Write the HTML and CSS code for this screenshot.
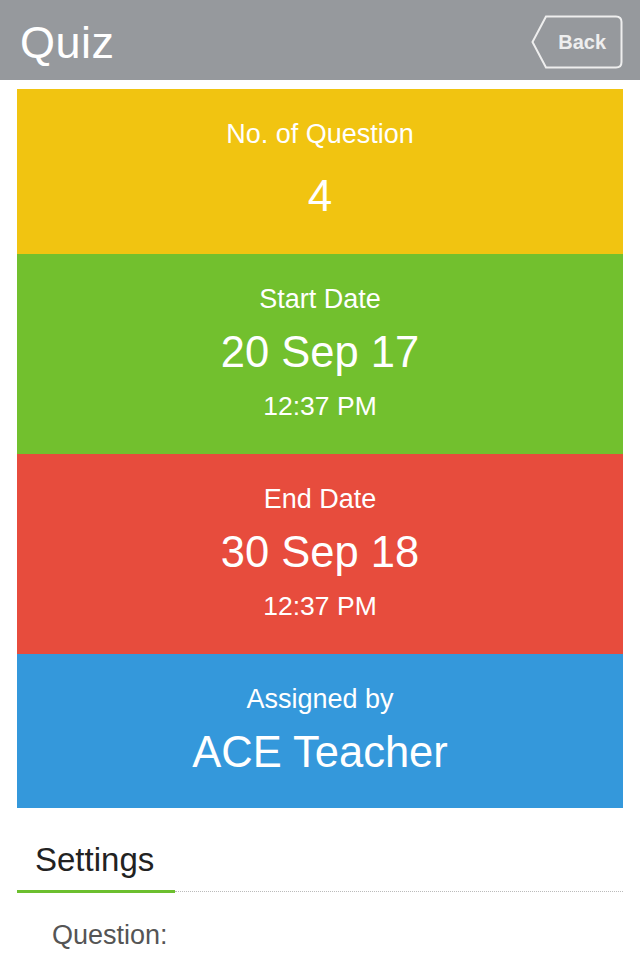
FILE: index.html
```html
<!DOCTYPE html>
<html>
<head>
<meta charset="utf-8">
<link rel="stylesheet" href="styles.css">
</head>
<body>
<header class="topbar">
  <h1 class="title">Quiz</h1>
  <button class="back">
    <svg class="back-shape" viewBox="0 0 92 54" width="92" height="54" aria-hidden="true">
      <path d="M15 1.5 L85 1.5 Q90.5 1.5 90.5 7 L90.5 47 Q90.5 52.5 85 52.5 L15 52.5 L1.5 27 Z" fill="none" stroke="#eeeeee" stroke-width="2"/>
    </svg>
    <span class="back-label">Back</span>
  </button>
</header>
<main class="content">
  <section class="card card-yellow">
    <div class="card-label">No. of Question</div>
    <div class="card-value card-value-count">4</div>
  </section>
  <section class="card card-green">
    <div class="card-label">Start Date</div>
    <div class="card-value">20 Sep 17</div>
    <div class="card-time">12:37 PM</div>
  </section>
  <section class="card card-red">
    <div class="card-label">End Date</div>
    <div class="card-value">30 Sep 18</div>
    <div class="card-time">12:37 PM</div>
  </section>
  <section class="card card-blue">
    <div class="card-label">Assigned by</div>
    <div class="card-value">ACE Teacher</div>
  </section>
  <div class="tabs">
    <div class="tab tab-active">Settings</div>
    <div class="tab-rest"></div>
  </div>
  <div class="setting-row">Question:</div>
</main>
</body>
</html>
```
FILE: styles.css
```css
* { box-sizing: border-box; }
html, body { margin: 0; padding: 0; background: #ffffff; }
body {
  font-family: "Liberation Sans", Arial, sans-serif;
  width: 640px;
  height: 960px;
  overflow: hidden;
}
.topbar {
  height: 80px;
  background: #96999d;
  display: flex;
  align-items: center;
  justify-content: space-between;
  padding: 0 17px 0 20px;
}
.title {
  margin: 4px 0 0;
  font-weight: 400;
  font-size: 45px;
  color: #ffffff;
  letter-spacing: 0.5px;
  line-height: 1;
}
.back {
  position: relative;
  width: 92px;
  height: 54px;
  padding: 0;
  border: 0;
  background: transparent;
  display: flex;
  align-items: center;
  justify-content: flex-end;
  margin-top: 4px;
}
.back-shape {
  position: absolute;
  left: 0;
  top: 0;
}
.back-label {
  position: relative;
  font-family: "Liberation Sans", Arial, sans-serif;
  font-weight: 700;
  font-size: 20px;
  color: #eeeeee;
  padding-right: 17px;
}
.content {
  padding: 9px 17px 0;
}
.card {
  color: #ffffff;
  text-align: center;
  padding-top: 25px;
}
.card-yellow { background: #f1c411; height: 165px; }
.card-green { background: #72c02e; height: 200px; }
.card-red { background: #e74c3d; height: 200px; }
.card-blue { background: #3498db; height: 154px; }
.card-label {
  font-size: 27px;
  line-height: 40px;
}
.card-value {
  font-size: 43.5px;
  line-height: 66px;
}
.card-value-count {
  margin-top: 9px;
  font-size: 44px;
}
.card-time {
  font-size: 26.5px;
  line-height: 42px;
}
.tabs {
  display: flex;
  margin-top: 32px;
}
.tab {
  font-size: 33px;
  line-height: 40px;
  color: #222222;
  padding: 0 0 10px 18px;
  width: 158px;
}
.tab-active {
  border-bottom: 3px solid #6cbf2e;
}
.tab-rest {
  flex: 1;
  border-bottom: 1px dotted #bbbbbb;
  margin-bottom: 1px;
}
.setting-row {
  margin-top: 24px;
  padding-left: 35px;
  font-size: 27px;
  line-height: 36px;
  color: #555555;
}
```
